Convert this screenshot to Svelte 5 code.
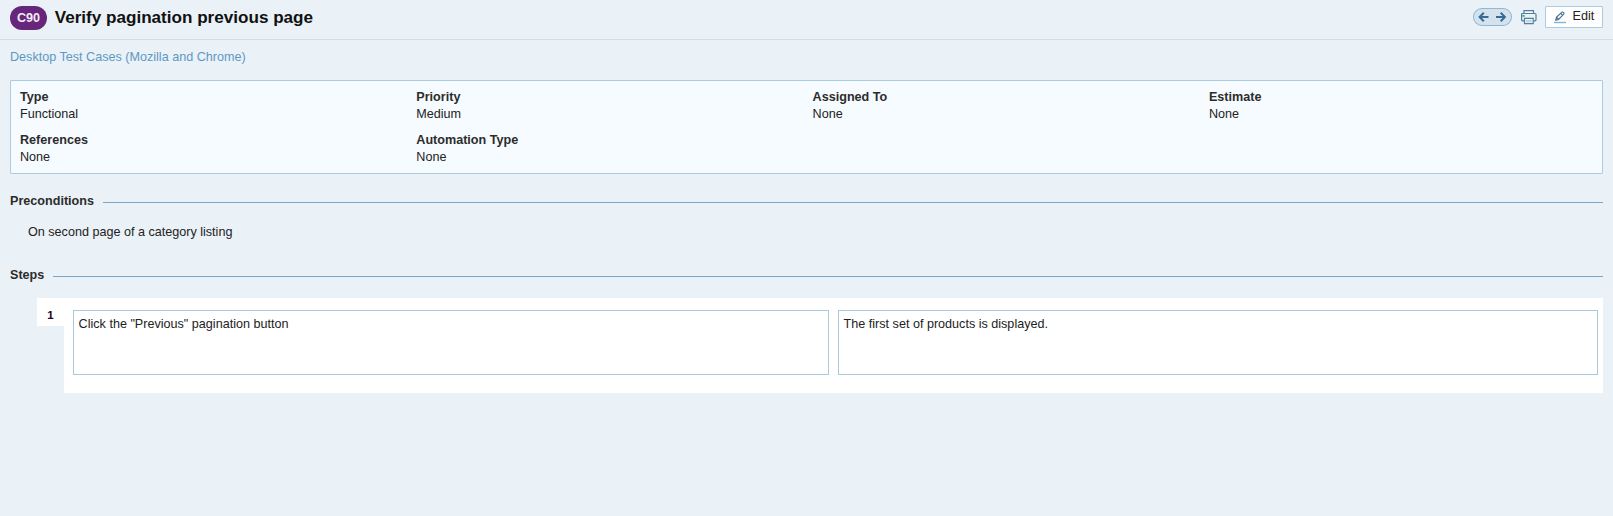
<script>
  const fields = [
    ['Type', 'Functional'],
    ['Priority', 'Medium'],
    ['Assigned To', 'None'],
    ['Estimate', 'None'],
    ['References', 'None'],
    ['Automation Type', 'None'],
  ];
  const steps = [
    { action: 'Click the "Previous" pagination button', expected: 'The first set of products is displayed.' },
  ];
</script>

<div class="page">
  <header>
    <span class="badge">C90</span>
    <h1>Verify pagination previous page</h1>
    <div class="tools">
      <div class="pager">
        <svg width="39" height="18" viewBox="0 0 39 18" fill="none" stroke="#376b93" stroke-width="2">
          <path d="M15.500 9H7M10.800 4.800L6.600 9l4.200 4.200M23 9h8.500M27.700 4.800L31.900 9l-4.200 4.200" />
        </svg>
      </div>
      <svg class="print" width="16" height="15" viewBox="0 0 16 15" fill="none" stroke="#527f9f" stroke-width="1.2">
        <path d="M3 3.500V.6h9.500v2.900" fill="#f4f9fc" />
        <path d="M3 10.800H1.600Q.6 10.800.6 9.800V4.600Q.6 3.500 1.600 3.500H14Q15 3.500 15 4.600V9.800Q15 10.800 14 10.800H12.500" />
        <path d="M3.500 8.300h8.700v5.400H3.500z" fill="#f4f9fc" />
        <path d="M5 10h5.700v2.300H5z" fill="#c0d6e5" stroke="none" />
        <path d="M1.400 5.900h2.200" stroke="#13a884" stroke-width="1.600" />
      </svg>
      <button type="button">
        <svg width="13" height="13" viewBox="0 0 13 13" fill="none" stroke="#426f92" stroke-width="1.100">
          <path d="M1.800 9.300l.6-2.900L7.700 1.300q.9-.7 1.800.1t0 1.900L4.500 8.500zM6.700 2.400l1.900 1.900M2.700 6.500l1.700 1.700" />
          <path d="M0 11.500h12" stroke="#83b3d6" stroke-width="1.400" />
        </svg>
        <span>Edit</span>
      </button>
    </div>
  </header>

  <main>
    <a class="crumb" href="#section">Desktop Test Cases (Mozilla and Chrome)</a>

    <dl class="fields">
      {#each fields as [label, value]}
        <div>
          <dt>{label}</dt>
          <dd>{value}</dd>
        </div>
      {/each}
    </dl>

    <h2>Preconditions</h2>
    <p class="pre">On second page of a category listing</p>

    <h2>Steps</h2>
    {#each steps as step, i}
      <div class="step">
        <div class="num">{i + 1}</div>
        <div class="body">
          <div class="cell">{step.action}</div>
          <div class="cell">{step.expected}</div>
        </div>
      </div>
    {/each}
  </main>
</div>

<style>
  :global(body) {
    background: #eaf1f7;
  }
  .page {
    min-height: 516px;
    font: 12.6px/17px "Liberation Sans", Arial, sans-serif;
    color: #222;
  }
  .page, .page * {
    box-sizing: border-box;
  }
  header {
    display: flex;
    align-items: flex-start;
    height: 40px;
    padding: 6px 10px 0;
    border-bottom: 1px solid #d0e0e8;
  }
  .badge {
    width: 37px;
    height: 24px;
    border-radius: 12px;
    background: #66267b;
    color: #f3eaf6;
    font-weight: bold;
    line-height: 24px;
    text-align: center;
  }
  h1 {
    margin: 0 0 0 7.7px;
    font-size: 17.1px;
    line-height: 23px;
    color: #111;
  }
  .tools {
    display: flex;
    align-items: flex-start;
    margin-left: auto;
  }
  .pager {
    display: flex;
    width: 39px;
    height: 18px;
    margin-top: 2px;
    border-radius: 9px;
    background: #d3e2ec;
    box-shadow: inset 0 0 0 1px #8db9d6;
  }
  .print {
    margin: 4px 8px 0 9px;
  }
  button {
    display: flex;
    width: 58px;
    height: 22px;
    padding: 0 0 0 8px;
    border: 1px solid #aacbe0;
    border-radius: 1px;
    background: #fff;
    color: #222;
    font: inherit;
    line-height: 18px;
  }
  button svg {
    margin: 4px 5.5px 0 0;
  }
  main {
    padding: 9px 10px 0;
  }
  .crumb {
    display: block;
    color: #5e99c4;
    text-decoration: none;
  }
  .fields {
    display: grid;
    grid-template-columns: repeat(4, 396.3px);
    align-content: start;
    row-gap: 9px;
    height: 94px;
    margin: 14px 0 19px;
    padding: 8px 0 0 9px;
    border: 1px solid #aacbe0;
    border-radius: 1px;
    background: #f6fbff;
  }
  dt {
    font-weight: bold;
    color: #2c2c2c;
  }
  dd {
    margin: 0;
  }
  h2 {
    display: flex;
    align-items: center;
    gap: 9px;
    margin: 0;
    font-size: 12.6px;
    line-height: 17px;
    color: #2c2c2c;
  }
  h2::after {
    content: "";
    flex: 1;
    height: 1px;
    margin-top: 2px;
    background: #7ba8c8;
  }
  .pre {
    margin: 14px 0 26px 18px;
  }
  .step {
    display: flex;
    align-items: flex-start;
    margin: 14px 0 0 27px;
  }
  .num {
    width: 27px;
    height: 28px;
    background: #fff;
    color: #1d0a25;
    font-size: 11.5px;
    font-weight: bold;
    line-height: 34px;
    text-align: center;
  }
  .body {
    display: grid;
    grid-template-columns: 756px 1fr;
    gap: 9px;
    flex: 1;
    height: 95px;
    padding: 12px 5px 18px 9px;
    background: #fff;
  }
  .cell {
    padding: 5px 4.6px;
    border: 1px solid #aacbdc;
  }
</style>
